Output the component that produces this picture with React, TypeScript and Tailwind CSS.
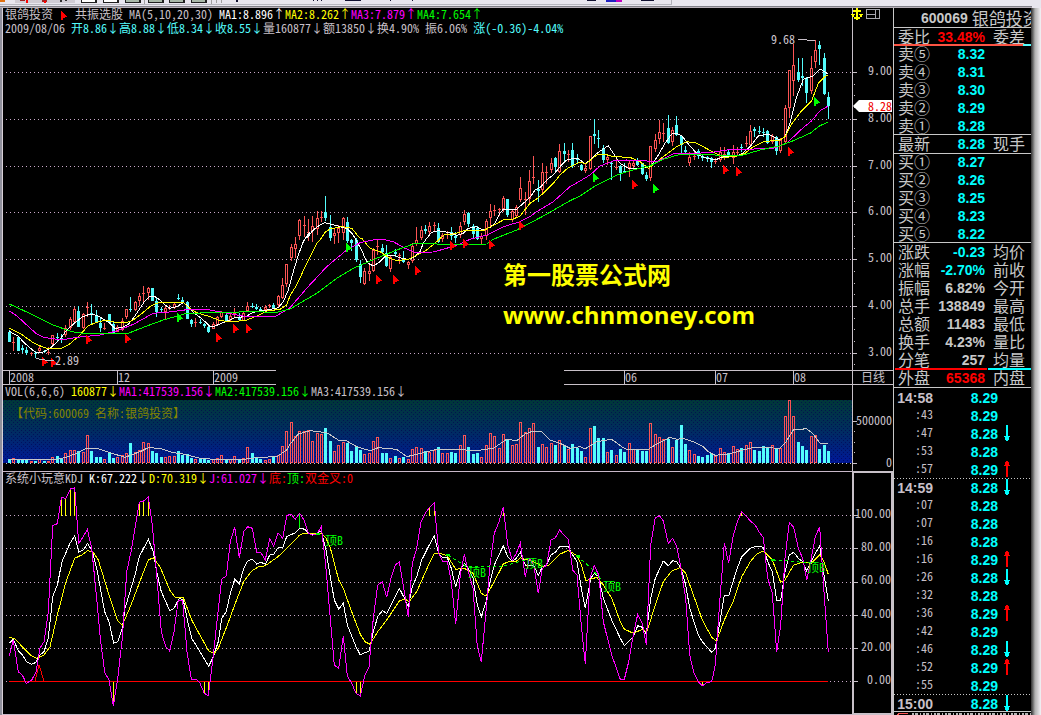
import React from "react";

type Tile = [number, number, string];

/* Each tile holds an origin in pixels and its samples on a three-per-pixel grid. */
function trace(tiles: Tile[]): string {
  return tiles
    .map(([x0, y0, samples]) =>
      samples
        .trim()
        .split(/\s+/)
        .map((pair) => {
          const [x, y] = pair.split(",").map(Number);
          return `${Math.round((x0 + x / 3) * 10) / 10},${Math.round((y0 + y / 3) * 10) / 10}`;
        })
        .join(" ")
    )
    .join(" ");
}

/* direction, high, body top, body bottom, low */
const CANDLES = `
c330,332,342,342 r337,342,343,351 c336,337,351,351 c345,348,350,353 c347,350,353,355 r352,353,354,356 c351,353,354,358
r346,348,351,352 c350,351,352,353 r347,352,353,355 r335,335,344,345 c333,337,338,341 c334,338,340,343 r325,328,335,337
r317,319,328,330 r307,309,322,322 c306,311,327,327 r313,314,328,329 r302,307,309,317 c304,313,314,324 c310,316,323,323
c318,323,328,332 r323,328,329,330 c314,314,323,323 c322,324,333,333 r325,327,332,332 r318,321,330,331 r309,309,317,319
c297,309,310,312 r301,302,310,311 r293,296,301,306 r286,293,294,302 r287,288,293,300 c288,288,301,301 c298,301,312,317
c307,309,310,312 r306,308,312,319 r305,308,309,310 r303,304,308,309 c294,298,299,300 c297,300,303,304 c301,302,319,319
c319,320,324,327 r318,322,323,327 c319,322,323,324 c323,324,326,328 c325,327,332,333 r322,324,329,329 r316,317,325,325
r311,312,317,318 c314,315,322,322 r313,316,320,322 r308,313,315,317 c313,317,320,321 r312,313,321,321 r302,306,311,312
c303,306,307,308 c304,307,309,310 c307,309,310,311 r305,307,310,313 r304,305,306,308 c303,305,308,309 r295,296,305,307
r278,285,298,299 r264,264,284,287 r244,247,258,261 r237,244,249,258 r219,220,236,240 r216,225,226,237 r219,232,233,241
r216,226,231,242 r211,218,229,235 r211,217,219,222 c196,212,218,221 c215,227,238,241 r229,233,236,244 r225,228,233,243
r217,218,233,240 c217,222,241,243 c239,240,243,251 c238,240,260,262 c260,264,277,283 r268,271,284,285 r263,271,274,281
r248,250,271,272 r240,246,247,255 c244,248,252,254 c245,253,266,267 r255,257,269,272 c249,252,254,257 r253,255,257,264
c251,258,262,263 r261,262,265,269 r243,246,261,263 r227,240,244,246 r226,230,238,240 c225,229,231,234 r222,226,232,235
r222,225,227,232 c223,228,242,243 r233,235,239,242 r231,234,235,239 c227,232,236,240 c232,236,238,243 r222,226,235,238
r210,214,222,225 c212,213,224,227 c224,226,234,238 c226,228,239,240 r233,236,239,244 r219,221,236,240 r204,211,218,226
r205,210,212,216 r208,209,210,216 r196,198,209,212 c199,199,215,217 r209,211,220,222 r205,207,216,217 r177,188,200,202
r192,199,201,215 r170,181,199,204 r156,177,179,184 c180,189,191,202 r163,172,190,194 r166,172,174,184 r158,163,170,173
c157,158,167,171 r144,151,172,173 c143,151,154,162 r150,154,155,162 c143,150,166,168 c154,158,160,164 c164,165,170,171
r164,168,171,173 r136,136,169,170 c119,134,136,144 c130,138,139,148 c145,148,160,163 r155,157,160,165 c162,163,164,180
r158,167,168,170 c165,166,173,181 c163,171,172,173 r160,163,168,177 r161,163,166,169 c158,160,165,166 c163,163,174,175
c172,175,179,181 r146,146,178,181 r134,140,149,152 r120,132,139,144 r123,133,134,142 c115,128,143,144 r127,130,142,146
c116,125,135,136 c135,136,145,153 c146,150,152,154 r152,157,163,166 r150,156,157,160 c149,151,156,159 c155,156,158,161
c156,157,159,162 c157,158,162,168 r158,161,163,164 r147,152,160,162 r147,154,155,160 c149,152,157,158 r145,152,158,164
r147,152,153,156 c144,147,148,152 r136,143,145,147 r125,131,145,146 c127,129,131,137 c126,131,132,134 c128,132,133,137
c130,131,143,144 r134,136,142,144 c136,137,151,155 r138,140,151,153 r105,108,142,144 r70,70,108,118 r44,65,81,96
c58,72,80,82 c58,76,78,86 c77,78,93,103 r56,68,91,94 r40,50,62,68 c41,45,49,65 c53,58,94,95 c92,97,106,119`
  .trim()
  .split(/\s+/)
  .map((s) => {
    const [high, top, bottom, low] = s.slice(1).split(",").map(Number);
    return { up: s[0] === "r", high, top, bottom, low };
  });

const VOLUMES = `
4 5 4 4 3 2 2 4 2 2 6 7 4 10 13 13 12 11 28 12 6 6 4 10 5 6 8 10 20 11 13 21 20 12 10 6 6 7 7 12 8 9 5 4 4 4 3 4 5 8 4 4 7
4 5 16 10 6 4 3 4 7 8 17 32 41 27 32 32 33 22 30 29 35 22 12 18 21 20 12 16 13 9 10 22 26 10 10 5 7 5 6 4 14 16 15 12 11
13 16 10 10 11 10 18 28 16 9 10 6 18 30 27 15 29 24 18 19 41 31 35 40 16 19 16 20 18 23 17 14 19 15 12 6 35 37 25 25 11
13 8 14 11 20 14 13 12 12 40 29 26 24 24 16 23 38 19 13 9 7 6 8 10 7 15 11 10 17 14 15 18 21 13 12 17 16 18 15 15 47 63
47 21 17 13 27 28 14 18 12`
  .trim()
  .split(/\s+/)
  .map(Number);

const slotX = (i: number) => Math.round(9 + (i * 13) / 3);

const MA5 = trace([
  [0, 230, "28,303 41,312 54,318 67,332 80,345 93,356 106,367 130,366 150,355 180,328 200,300 225,278 245,262 270,252 290,256 310,267 330,280 345,295 365,293 385,283 400,265 420,235 435,212 450,199 465,200 480,210 495,225 510,235 530,230 550,218 565,228 580,247 600,262 615,275 630,290 645,288 665,280 690,270 705,262 720,262 740,258 760,247 780,242 800,240 835,233 850,215 865,180 880,125 895,75"],
  [290, 230, "40,35 60,5"],
  [290, 0, "50,715 70,690 90,675 105,668 125,673 150,680 170,685 190,705"],
  [290, 230, "200,35 215,60 225,85 235,100 250,108 270,95 290,75 310,75 335,85 355,88 375,80 390,65 400,40"],
  [290, 0, "410,715 425,697 445,692 475,697 500,706 520,700 535,685 560,680 580,690 600,682 615,670 630,640 640,628 680,628 700,610 720,592 735,570 750,563 770,540 790,525 810,500 830,480 850,475 865,475 885,492"],
  [580, 0, "0,480 15,492 30,480 45,465 65,450 85,437 100,460 120,490 145,505 175,505 200,503 215,495 235,465 255,430 275,402 290,400 305,407 325,432 350,460 370,472 405,480 430,470 470,468 490,458 510,440 535,408 565,402 600,420 615,410 630,370 650,290 670,238 700,228 720,207 745,222"],
]);

const MA10 = trace([
  [0, 230, "28,295 60,310 100,338 130,352 150,357 185,355 205,345 235,320 265,287 290,277 320,270 350,278 385,276 400,270 420,255 450,230 470,220 490,216 550,216 565,232 590,248 630,260 660,272 700,275 740,270 770,258 800,243 840,238 860,225"],
  [290, 230, "0,197 20,165 50,100 80,40"],
  [290, 0, "90,720 105,697 120,687 155,680 185,685 210,715"],
  [290, 230, "215,25 240,55 270,65 300,85 320,92 355,88 380,75 410,60 440,35 465,12"],
  [290, 0, "480,705 520,693 580,692 640,660 670,657 690,648 720,610 740,597 760,580 790,550 810,525 835,503 868,487"],
  [580, 0, "0,488 20,490 50,465 75,463 100,470 150,472 180,485 205,505 225,490 260,462 290,440 320,425 345,428 370,440 400,457 430,472 465,470 495,460 520,440 550,425 600,420 615,410 635,372 665,332 695,302 715,250 735,230 745,225"],
]);

const MA20 = trace([
  [0, 230, "28,243 50,257 80,285 110,312 130,322 185,330 230,322 300,315 350,303 400,283 460,250 500,247 570,238 630,240 700,253 740,260 825,260 850,245"],
  [290, 230, "0,233 50,175 110,110 170,60 210,38 250,30 280,28 310,35 345,55 375,67 430,66 470,55 510,42"],
  [290, 0, "540,718 590,705 640,680 690,665 720,650 740,635 790,605 840,560"],
  [580, 0, "0,543 30,525 60,498 100,483 140,480 200,483 230,485 280,462 390,458 440,450 580,445 620,430 665,387 695,362 720,332 745,318"],
]);

const MA30 = trace([
  [0, 230, "28,222 100,255 160,285 215,305 260,311 385,310 440,288 490,270 560,250 640,248 750,245 830,247"],
  [290, 230, "0,237 80,190 140,145 190,115 260,85 320,60 370,42 400,40 500,45 590,42"],
  [290, 0, "610,718 680,690 760,648 840,602"],
  [580, 0, "0,588 50,555 110,525 150,512 210,497 250,478 300,463 370,463 440,467 490,465 540,450 600,437 640,422 690,400 720,377 745,366"],
]);

const VOL_MA = trace([
  [0, 230, "28,690 120,688 160,690 200,682 230,670 260,655 290,655 330,668 375,682 420,665 445,653 480,655 520,668 550,672 600,685 670,690 730,688 780,682 830,680 860,660"],
  [290, 230, "0,643 25,612 60,602 110,608 145,630 170,633 200,650 240,662 265,653 320,658 350,680 400,668 440,658 510,658 550,663 610,655 650,628 680,632 705,612 730,603 755,605 780,630 810,640 840,655"],
  [580, 230, "0,650 15,657 50,635 95,628 125,650 145,660 205,658 225,645 270,622 290,628 310,625 340,635 370,650 385,665 405,676 445,672 490,660 520,652 580,654 600,655 615,640 640,600 680,596 700,612 720,640 745,642"],
]);

const J_LINE = trace([
  [0, 465, "28,572 40,525 55,620 67,630 79,655 95,645 108,622 120,550 132,530 145,440 158,182 172,176 184,98 198,100 211,72 224,68 236,235 250,215 262,193 275,250 290,400 301,520 314,622 327,645 340,723 353,640 367,520 380,320 393,260 405,190 418,112 431,108 445,95 457,180 470,330 484,500 497,545 509,558 522,500 535,405 548,408 561,560 574,642 590,645 600,655 613,685 625,692 639,580 652,460 665,342 679,333 691,230 704,187 718,278 731,200 743,185 757,190 770,262 783,263 796,285 809,222 821,243 834,203 848,220 860,152"],
  [290, 465, "3,147 16,163 29,145 42,165 55,205 68,211 82,205 94,185 107,300 120,450 133,600 146,610 160,512 172,632 185,655 198,685 211,693 225,630 237,605 250,460 263,360 277,350 290,397 303,340 316,300 328,290 341,370 355,455 367,295 380,250 393,170 406,145 418,128 433,113 446,265 458,290 472,290 484,350 497,478 511,330 523,268 535,320 549,370 562,545 574,590 588,440 600,300 613,205 627,170 640,125 653,240 667,285 679,265 691,235 706,335 718,280 731,300 745,385 757,310 770,300 783,225 796,218 809,195 822,210 835,222 848,315 861,330"],
  [580, 465, "4,480 16,598 30,340 43,302 56,330 70,470 95,570 121,643 133,643 146,590 160,510 173,448 187,475 199,540 212,240 226,158 238,152 250,168 265,235 278,220 290,245 303,310 317,400 329,570 342,625 355,650 367,663 380,653 395,650 406,600 420,400 433,235 446,295 459,215 472,170 485,140 498,152 511,168 524,178 537,200 550,218 563,340 577,385 590,560 602,480 615,280 628,172 641,187 655,250 668,280 680,345 694,280 706,215 719,185 732,380 745,562"],
]);

const K_LINE = trace([
  [0, 465, "28,535 40,522 55,558 67,570 80,590 95,598 108,592 120,570 132,560 145,520 158,395 172,360 186,290 210,235 224,212 236,262 250,255 263,235 277,260 290,310 314,440 327,470 341,535 353,530 367,490 375,430 393,370 405,330 418,275 445,223 460,260 470,320 484,380 509,437 522,430 538,400 550,405 561,460 575,520 600,560 626,604 640,575 655,530 665,460 679,440 691,385 704,343 718,357 731,310 743,288 757,283 770,297 783,292 796,298 809,270 821,268 834,248 848,248 860,215"],
  [290, 465, "16,203 29,190 45,193 55,205 70,210 94,198 107,250 120,330 133,405 146,432 160,415 172,480 198,545 211,570 225,563 238,558 250,500 263,455 277,437 290,445 303,420 328,370 341,395 355,425 367,365 380,335 395,285 418,240 433,213 446,265 458,278 472,278 484,310 497,367 511,315 523,295 535,310 549,340 562,420 574,455 588,410 600,350 613,300 640,242 653,275 667,290 679,280 691,262 706,300 731,300 745,332 757,305 770,300 783,270 796,262 809,245 835,245 848,270 861,290"],
  [580, 465, "4,370 16,430 32,340 43,325 56,335 70,400 95,465 121,520 133,542 160,515 173,482 187,487 199,508 212,400 226,340 250,288 265,302 278,287 290,290 303,310 317,360 329,430 355,510 367,530 395,562 406,550 420,470 433,390 446,393 459,350 472,310 485,275 511,250 530,243 550,247 563,290 577,320 590,406 602,406 615,320 628,270 641,262 655,280 668,290 680,318 694,290 706,265 719,243 732,330 745,407"],
]);

const D_LINE = trace([
  [0, 465, "28,517 45,522 67,545 95,573 110,580 132,570 150,545 172,450 198,350 224,280 245,270 263,257 280,262 295,285 327,390 353,468 367,481 393,420 425,335 445,285 460,278 480,305 509,375 525,397 550,398 575,465 605,520 626,557 642,566 655,550 680,485 704,420 731,350 757,316 775,306 796,302 834,275 860,250"],
  [290, 465, "29,210 42,205 94,205 107,218 120,245 146,345 160,370 185,440 211,508 225,530 240,538 263,500 290,465 328,408 345,402 357,410 380,380 418,295 433,265 446,264 472,272 497,313 523,310 549,325 574,385 588,393 613,350 640,297 655,290 680,288 691,278 706,283 731,290 757,305 775,302 809,268 835,256 861,272"],
  [580, 465, "4,300 18,347 50,337 70,360 95,400 121,470 133,492 160,505 187,493 200,502 226,420 250,350 275,318 300,308 317,325 342,395 367,465 395,517 409,528 420,500 433,465 459,410 485,335 511,290 530,267 550,258 563,270 577,285 602,352 615,345 641,300 668,292 694,295 719,270 732,290 745,328"],
]);

const OVERSHOOT: [number, number][] = [
  [61, 498], [65, 499], [70, 489], [74, 488], [139, 503], [143, 501], [148, 497],
  [429, 508], [434, 503], [503, 507], [741, 512],
];
const UNDERSHOOT: [number, number][] = [
  [113, 705], [204, 693], [208, 695], [356, 693], [360, 695], [702, 685],
];

const RED_FLAGS: [number, number][] = [
  [42, 357], [51, 358], [86, 335], [125, 334], [216, 333], [233, 324], [246, 324], [376, 275], [393, 275],
  [415, 266], [450, 241], [463, 239], [489, 240], [519, 221], [632, 180], [723, 165], [736, 167], [788, 147],
];
const GREEN_FLAGS: [number, number][] = [[177, 313], [346, 243], [593, 173], [653, 184], [814, 97]];

const PRICE_GRID = [72, 119, 166, 212, 259, 306, 353];
const KDJ_GRID = [515, 548, 582, 615, 648, 681];

function Flag({ x, y, fill }: { x: number; y: number; fill: string }) {
  return (
    <path
      transform={`translate(${x} ${y})`}
      d="M0 0H1V1H2V2H3V3H4V4H5V5H6V6H4V7H2V9H0Z"
      fill={fill}
    />
  );
}

function GridLines({ rows }: { rows: number[] }) {
  return (
    <>
      {rows.map((y) => (
        <line key={y} x1={6} x2="101%" y1={y + 0.5} y2={y + 0.5} stroke="#c8a8c8" strokeDasharray="1 3" />
      ))}
    </>
  );
}

function PriceChart() {
  return (
    <svg className="block h-[334px] w-full overflow-visible" shapeRendering="crispEdges" role="img" aria-label="日线">
      <g transform="translate(-3 -36)" fill="none">
        <GridLines rows={PRICE_GRID} />
        {CANDLES.map((c, i) => {
          const x = slotX(i);
          const thin = c.bottom - c.top < 3;
          const color = c.up ? "#fc5454" : "#54fcfc";
          return (
            <g key={i}>
              <line x1={x + 0.5} x2={x + 0.5} y1={c.high} y2={c.low} stroke={color} />
              {thin ? (
                <rect x={x - 1} y={c.top} width={3} height={c.up ? 1 : c.bottom - c.top} fill={color} />
              ) : c.up ? (
                <rect x={x - 0.5} y={c.top + 0.5} width={2} height={c.bottom - c.top - 1} stroke={color} fill="#000" />
              ) : (
                <rect x={x - 1} y={c.top} width={3} height={c.bottom - c.top} fill={color} />
              )}
            </g>
          );
        })}
        <polyline points={MA5} stroke="#fff" />
        <polyline points={MA10} stroke="#ff0" />
        <polyline points={MA20} stroke="#f0f" />
        <polyline points={MA30} stroke="#0f0" />
        {RED_FLAGS.map(([x, y]) => (
          <Flag key={x} x={x} y={y} fill="#f00" />
        ))}
        {GREEN_FLAGS.map(([x, y]) => (
          <Flag key={x} x={x} y={y} fill="#0f0" />
        ))}
        <path d="M798 39.5H806L808 40.5H815" stroke="#c8c0c8" />
        <path d="M36 358L40 359.500L50 360.500H54" stroke="#c8c0c8" />
        <g fill="#d0c8d0" fontSize={12} fontFamily="'Noto Sans Mono CJK SC','DejaVu Sans Mono',monospace">
          <text x={771} y={44}>9.68</text>
          <text x={55} y={365}>2.89</text>
        </g>
      </g>
    </svg>
  );
}

function VolumeChart() {
  return (
    <svg className="block h-[64px] w-full" shapeRendering="crispEdges" role="img" aria-label="VOL">
      <defs>
        <linearGradient id="sea" x1="0" y1="0" x2="0" y2="1">
          <stop offset="0" stopColor="#003838" />
          <stop offset="0.45" stopColor="#002e5c" />
          <stop offset="1" stopColor="#001898" />
        </linearGradient>
        <pattern id="grain" width="4" height="4" patternUnits="userSpaceOnUse">
          <rect x="0" y="0" width="1" height="1" fill="#000050" fillOpacity="0.6" />
          <rect x="2" y="2" width="1" height="1" fill="#000050" fillOpacity="0.6" />
        </pattern>
      </defs>
      <rect width="100%" height="63" fill="url(#sea)" />
      <rect width="100%" height="63" fill="url(#grain)" />
      <g transform="translate(-3 -400)" fill="none">
        <line x1={6} x2="101%" y1={463.5} y2={463.5} stroke="#c8c8c8" strokeDasharray="1 3" />
        {VOLUMES.slice(0, CANDLES.length).map((h, i) => {
          const x = slotX(i);
          return CANDLES[i].up ? (
            <rect key={i} x={x - 0.5} y={463.5 - h} width={2} height={h - 1} stroke="#fc5454" />
          ) : (
            <rect key={i} x={x - 1} y={463 - h} width={3} height={h} fill="#54fcfc" />
          );
        })}
        <polyline points={VOL_MA} stroke="#c8c8c8" />
      </g>
    </svg>
  );
}

function KdjChart() {
  return (
    <svg className="block h-[228px] w-full" shapeRendering="crispEdges" role="img" aria-label="KDJ">
      <g transform="translate(-3 -486)" fill="none">
        <GridLines rows={KDJ_GRID} />
        <rect x={9} y={681} width={819} height={1} fill="#f00" />
        <path d="M35 681L39 665L44 681" stroke="#f00" />
        {OVERSHOOT.map(([x, y]) => (
          <line key={x} x1={x + 0.5} x2={x + 0.5} y1={y} y2={516} stroke="#ff0" />
        ))}
        {UNDERSHOOT.map(([x, y]) => (
          <line key={x} x1={x + 0.5} x2={x + 0.5} y1={682} y2={y} stroke="#ff0" />
        ))}
        <line x1={299.5} x2={299.5} y1={514} y2={528} stroke="#0f0" />
        <polyline points={K_LINE} stroke="#fff" />
        <polyline points={D_LINE} stroke="#ff0" />
        <polyline points={J_LINE} stroke="#f0f" />
        <path
          d="M448 555L467 567L503 566L526 560M577 556L591 568L603 581M773 560L790 561L808 563"
          stroke="#0f0"
          strokeDasharray="3 3"
        />
        <g fill="#0f0">
          <rect x={316} y={533} width={4} height={2} />
          <rect x={446} y={554} width={4} height={2} />
          <rect x={576} y={555} width={4} height={2} />
          <rect x={771} y={559} width={4} height={2} />
          <g fontSize={12} fontFamily="'Noto Sans Mono CJK SC','Noto Sans CJK SC',monospace">
            <text x={325} y={545}>顶B</text>
            <text x={468} y={577}>顶B</text>
            <text x={525} y={568}>顶B</text>
            <text x={603} y={591}>顶B</text>
            <text x={807} y={572}>顶B</text>
          </g>
        </g>
      </g>
    </svg>
  );
}

function Mark({ arrow = "↓" }: { arrow?: string }) {
  return <span className="inline-block w-3 text-center">{arrow}</span>;
}

function TickArrow({ up }: { up: boolean }) {
  return (
    <svg className="ml-[6px] block h-[16px] w-[6px]" viewBox="0 0 6 16" shapeRendering="crispEdges" aria-hidden="true">
      {up ? (
        <path d="M2 16V5H0V4H1V1H2V0H4V1H5V4H6V5H4V16Z" fill="#f00" />
      ) : (
        <path d="M2 0V11H0V12H1V15H2V16H4V15H5V12H6V11H4V0Z" fill="#0ff" />
      )}
    </svg>
  );
}

type Quote = [label: string, value: string, second: string, tone: string];

const SELL: Quote[] = [
  ["卖⑤", "8.32", "", "text-[#00ffff]"],
  ["卖④", "8.31", "", "text-[#00ffff]"],
  ["卖③", "8.30", "", "text-[#00ffff]"],
  ["卖②", "8.29", "", "text-[#00ffff]"],
  ["卖①", "8.28", "", "text-[#00ffff]"],
];
const LATEST: Quote[] = [["最新", "8.28", "现手", "text-[#00ffff]"]];
const BUY: Quote[] = [
  ["买①", "8.27", "", "text-[#00ffff]"],
  ["买②", "8.26", "", "text-[#00ffff]"],
  ["买③", "8.25", "", "text-[#00ffff]"],
  ["买④", "8.23", "", "text-[#00ffff]"],
  ["买⑤", "8.22", "", "text-[#00ffff]"],
];
const STATS: Quote[] = [
  ["涨跌", "-0.23", "均价", "text-[#00ffff]"],
  ["涨幅", "-2.70%", "前收", "text-[#00ffff]"],
  ["振幅", "6.82%", "今开", "text-[#c8c8c8]"],
  ["总手", "138849", "最高", "text-[#c8c8c8]"],
  ["总额", "11483", "最低", "text-[#c8c8c8]"],
  ["换手", "4.23%", "量比", "text-[#c8c8c8]"],
  ["分笔", "257", "均量", "text-[#c8c8c8]"],
];

function QuoteTable({ rows, line }: { rows: Quote[]; line: string }) {
  return (
    <table className={`w-full table-fixed border-separate border-spacing-0 ${line}`}>
      <colgroup>
        <col className="w-[38px]" />
        <col className="w-[53px]" />
        <col />
      </colgroup>
      <tbody>
        {rows.map(([label, value, second, tone]) => (
          <tr key={label} className="h-[18px]">
            <th scope="row" className="p-0 pb-[2px] pl-[4px] text-left text-[16px] leading-[16px] font-medium whitespace-nowrap">
              {label}
            </th>
            <td className={`p-0 text-right font-['Liberation_Sans',sans-serif] text-[14px] leading-[17px] font-bold ${tone}`}>
              {value}
            </td>
            <td className="p-0 pb-[2px] pl-[8px] text-[16px] leading-[16px] font-medium whitespace-nowrap">{second}</td>
          </tr>
        ))}
      </tbody>
    </table>
  );
}

const TICKS: [string, string, string][] = [
  ["14:58", "8.29", ""],
  [":43", "8.29", ""],
  [":47", "8.28", "down"],
  [":53", "8.28", ""],
  [":57", "8.29", "up"],
  ["14:59", "8.28", "down"],
  [":07", "8.28", ""],
  [":07", "8.28", ""],
  [":16", "8.28", ""],
  [":16", "8.29", "up"],
  [":26", "8.28", "down"],
  [":32", "8.28", ""],
  [":36", "8.29", "up"],
  [":42", "8.29", ""],
  [":46", "8.28", "down"],
  [":52", "8.29", "up"],
  [":55", "8.29", ""],
  ["15:00", "8.28", "down"],
];

function TickTable() {
  return (
    <table className="w-full table-fixed border-separate border-spacing-0">
      <colgroup>
        <col className="w-[39px]" />
        <col className="w-[65px]" />
        <col />
      </colgroup>
      <tbody>
        {TICKS.map(([time, price, move], i) => {
          const minute = time.length > 3;
          return (
            <tr
              key={i}
              className={`h-[18px] ${
                minute && i > 0
                  ? "bg-[repeating-linear-gradient(to_right,#c8c8c8_0_1px,transparent_1px_3px)] bg-[length:100%_1px] bg-no-repeat"
                  : ""
              }`}
            >
              <td
                className={
                  minute
                    ? "p-0 pt-[2px] text-right font-['Liberation_Sans',sans-serif] text-[14px] leading-[16px] font-bold text-[#c8c0c8]"
                    : "p-0 pb-[2px] text-right text-[12px] leading-[16px] text-[#c8c0c8]"
                }
              >
                {time}
              </td>
              <td className="p-0 pt-[2px] text-right font-['Liberation_Sans',sans-serif] text-[14px] leading-[16px] font-bold text-[#00ffff]">
                {price}
              </td>
              <td className="p-0">{move ? <TickArrow up={move === "up"} /> : null}</td>
            </tr>
          );
        })}
      </tbody>
    </table>
  );
}

function SidePanel() {
  return (
    <aside className="w-[138px] shrink-0 overflow-hidden border-l border-[#c8c8c8] font-['Noto_Sans_Mono_CJK_SC','Noto_Sans_CJK_SC',sans-serif] text-[#c8c8c8]">
      <h1 className="flex h-[19px] items-center gap-1 pl-[27px] text-[17px] leading-[18px] font-medium whitespace-nowrap">
        <span className="font-['Liberation_Sans',sans-serif] text-[14px] font-bold">600069</span>
        <span>银鸽投资</span>
      </h1>
      <QuoteTable rows={[["委比", "33.48%", "委差", "text-[#ff0000]"]]} line="h-[17px] border-t border-[#c8c8c8]" />
      <div className="-mt-[2px] flex h-[2px]">
        <div className="flex-1 bg-[#fc5444]" />
        <div className="w-[8px] bg-[#54fcfc]" />
      </div>
      <div className="-mt-px">
        <QuoteTable rows={SELL} line="" />
      </div>
      <div className="-mt-px">
        <QuoteTable rows={LATEST} line="border-y border-[#c8c8c8]" />
      </div>
      <div className="-mt-px">
        <QuoteTable rows={BUY} line="" />
      </div>
      <div className="-mt-px">
        <QuoteTable rows={STATS} line="border-t border-[#c8c8c8]" />
      </div>
      <div className="-mt-px flex h-[2px] gap-px pl-px">
        <div className="w-[92px] bg-[#ff0000]" />
        <div className="flex-1 bg-[#00ffff]" />
      </div>
      <div className="-mt-px h-[19px]">
        <QuoteTable rows={[["外盘", "65368", "内盘", "text-[#ff0000]"]]} line="border-b border-[#c8c8c8]" />
      </div>
      <TickTable />
      <svg className="relative -mt-px block h-[4px] w-full bg-black" shapeRendering="crispEdges" aria-hidden="true">
        <rect width="100%" height="1" fill="#c8c8c8" />
        <path d="M3 4L6 2H14" stroke="#fc5454" fill="none" />
        <path d="M18 2.500H138M18 3.500H138" stroke="#b8b8b8" strokeDasharray="2 1 3 2 1 2" />
      </svg>
    </aside>
  );
}

function ToolbarStrip() {
  return (
    <svg className="block h-[8px] w-full bg-[#e8e6ee]" shapeRendering="crispEdges" aria-hidden="true">
      <rect x="15" width="60" height="3" fill="#d0ccd4" />
      <path d="M0 0H5V2H0Z" fill="#e07010" />
      <path d="M20 0H25V1H20ZM42 0H47V2H42Z" fill="#a02020" />
      <path d="M26 0H28V3H26ZM44 1H46V3H44Z" fill="#f00" />
      <path d="M60 0H62V2H60ZM65 0H67V1H65Z" fill="#303030" />
      {[81, 103, 125, 148, 169, 191].map((x, i) => (
        <g key={x}>
          <rect x={x} width="16" height="3" fill="#202020" />
          <rect x={x + 1} width="13" height="2" fill={i < 2 ? "#fff" : "#a8b8a8"} />
        </g>
      ))}
      <path d="M144 0H145V4H144ZM211 0H212V4H211ZM216 0H217V3H216ZM221 0H222V3H221Z" fill="#a0a0a0" />
      <path d="M236 0H238V2H236ZM313 0H314V1H313ZM317 0H318V1H317ZM321 0H322V1H321ZM345 0H361V1H345ZM390 0H391V1H390ZM412 0H413V1H412ZM587 0H596V1H587ZM641 0H654V1H641Z" fill="#101030" />
      <path d="M606 0H616V2H606Z" fill="#2020c0" />
      <path d="M616 0H622V2H616Z" fill="#c000c0" />
      <path d="M0 4H672V0H671V4Z" fill="#b0b0b8" />
      <rect y="4" width="672" height="1" fill="#b8b8c0" />
      <rect y="6" width="1032" height="1" fill="#808088" />
      <rect y="7" width="1032" height="1" fill="#b8b0b8" />
    </svg>
  );
}

function AxisTicks({ rows, minor, shift }: { rows: number[]; minor: number[]; shift: number }) {
  return (
    <svg className="absolute inset-0 h-full w-full" shapeRendering="crispEdges" aria-hidden="true">
      <g fill="#c8c0c8">
        {rows.map((y) => (
          <rect key={y} x={0} y={y - shift} width={4} height={1} />
        ))}
        {minor.map((y) => (
          <rect key={y} x={1} y={y - shift} width={1} height={1} />
        ))}
      </g>
    </svg>
  );
}

const PRICE_MINOR = Array.from({ length: 25 }, (_, i) => Math.round(83.7 + i * 11.7)).filter(
  (y) => y < 366 && !PRICE_GRID.some((g) => Math.abs(g - y) < 3)
);

export default function App() {
  return (
    <div className="flex min-h-screen flex-col bg-[#e8e6ee]">
      <ToolbarStrip />
      <div className="flex flex-1">
        <div className="w-[3px] shrink-0 border-r border-[#d8d0d8] bg-[#90909c]" />
        <div className="flex min-w-0 flex-1 bg-black">
          <main className="min-w-0 flex-1 font-['Noto_Sans_Mono_CJK_SC','DejaVu_Sans_Mono','Noto_Sans_CJK_SC',monospace] text-[12px] text-[#c8c0c8]">
            <section className="flex">
              <div className="relative min-w-0 flex-1">
                <header className="h-[28px] pl-[2px] leading-[14px] whitespace-pre">
                  <p className="flex h-[13px] leading-[12px]">
                    <span>银鸽投资</span>
                    <svg className="ml-2 mr-[7px] mt-[3px] block h-[9px] w-[7px]" shapeRendering="crispEdges" aria-hidden="true">
                      <Flag x={0} y={0} fill="#f00" />
                    </svg>
                    <span>共振选股 MA(5,10,20,30) </span>
                    <span className="text-white">MA1:8.896<Mark arrow="↑" /></span>
                    <span className="text-[#ffff00]">MA2:8.262<Mark arrow="↑" /></span>
                    <span className="text-[#ff00ff]">MA3:7.879<Mark arrow="↑" /></span>
                    <span className="text-[#00ff00]">MA4:7.654<Mark arrow="↑" /></span>
                  </p>
                  <p>
                    <span>2009/08/06 </span>
                    <span className="text-[#54fcfc]">
                      开8.86<Mark />高8.88<Mark />低8.34<Mark />收8.55<Mark />
                    </span>
                    <span>
                      量160877<Mark />额13850<Mark />换4.90% 振6.06%{" "}
                    </span>
                    <span className="text-[#54fcfc]">涨(-0.36)-4.04%</span>
                  </p>
                </header>
                <PriceChart />
                <div className="absolute top-[247px] left-[500px] font-['Open_Sans','Noto_Sans_CJK_SC',sans-serif] text-[24px] leading-[40px] font-bold text-[#ffff00]">
                  <p>第一股票公式网</p>
                  <p>www.chnmoney.com</p>
                </div>
              </div>
              <div className="relative w-[41px] shrink-0 border-l border-[#c8c0c8]">
                <AxisTicks rows={PRICE_GRID} minor={PRICE_MINOR} shift={8} />
                <svg className="relative -ml-[2px] block h-[12px] w-[30px]" shapeRendering="crispEdges" aria-hidden="true">
                  <path d="M5 0H7V2H10V4H7V9H9V7H8V6H12V7H11V9H9V11H7V12H5V11H3V9H1V7H0V6H4V7H3V9H5V4H2V2H5Z" fill="#ff0" />
                  <path d="M15.500 1.500H28.500V10.500H15.500ZM24.500 1.500V10.500M15.500 6.500H24.500" stroke="#a8a8b0" fill="none" />
                </svg>
                <div className="mt-[44px] flex h-[293px] flex-col justify-between pr-px leading-[12px]">
                  {["9.00", "8.00", "7.00", "6.00", "5.00", "4.00", "3.00"].map((v) => (
                    <p key={v} className="text-right">
                      {v}
                    </p>
                  ))}
                </div>
                <div className="absolute top-[92px] left-0 flex h-[12px]">
                  <svg className="block h-[12px] w-[6px]" aria-hidden="true">
                    <path d="M6 0L0 6L6 12Z" fill="#fff" />
                  </svg>
                  <span className="w-[33px] bg-white text-right leading-[12px] text-[#f00000]">8.28</span>
                </div>
              </div>
            </section>

            <section className="flex h-[15px] leading-[12px] whitespace-nowrap">
              <div className="flex w-[273px] border-y border-[#c8c0c8] pl-[6px]">
                <span className="w-[108px] border-l border-[#c8c0c8]">2008</span>
                <span className="w-[96px] border-l border-[#c8c0c8]">12</span>
                <span className="border-l border-[#c8c0c8]">2009</span>
              </div>
              <div className="w-[288px]" />
              <div className="flex flex-1 border-y border-[#c8c0c8] pl-[60px]">
                <span className="w-[91px] border-l border-[#c8c0c8]">06</span>
                <span className="w-[78px] border-l border-[#c8c0c8]">07</span>
                <span className="border-l border-[#c8c0c8]">08</span>
              </div>
              <div className="w-[41px] border-y border-l border-[#c8c0c8] text-center">日线</div>
            </section>

            <section className="flex">
              <div className="relative min-w-0 flex-1">
                <p className="h-[15px] pl-[2px] leading-[12px] whitespace-pre">
                  <span>VOL(6,6,6) </span>
                  <span className="text-[#ffff00]">160877<Mark /></span>
                  <span className="text-[#ff00ff]">MA1:417539.156<Mark /></span>
                  <span className="text-[#00ff00]">MA2:417539.156<Mark /></span>
                  <span>MA3:417539.156<Mark /></span>
                </p>
                <VolumeChart />
                <p className="absolute top-[21px] left-[8px] leading-[14px] whitespace-pre text-[#848400]">
                  【代码:600069 名称:银鸽投资】
                </p>
                <div className="h-[7px]" />
              </div>
              <div className="relative w-[41px] shrink-0 border-l border-[#c8c0c8] pr-px">
                <AxisTicks rows={[421, 463]} minor={[431, 442, 452]} shift={385} />
                <p className="mt-[28px] flex h-[14px] justify-end leading-[14px]">500000</p>
                <p className="mt-[28px] flex h-[14px] justify-end leading-[14px]">0</p>
              </div>
            </section>

            <section className="flex">
              <div className="min-w-0 flex-1 border-y border-[#c8b8c8]">
                <p className="h-[14px] pl-[2px] leading-[12px] whitespace-pre">
                  <span>系统小玩意KDJ </span>
                  <span className="text-white">K:67.222<Mark /></span>
                  <span className="text-[#ffff00]">D:70.319<Mark /></span>
                  <span className="text-[#ff00ff]">J:61.027<Mark /></span>
                  <span className="text-[#ff0000]">底:</span>
                  <span className="text-[#00ff00]">顶:</span>
                  <span className="text-[#ff0000]">双金叉:0</span>
                </p>
                <KdjChart />
              </div>
              <div className="relative w-[41px] shrink-0 border-2 border-[#c8c0c8]">
                <AxisTicks rows={KDJ_GRID} minor={[]} shift={473} />
                <div className="mt-[34px] flex h-[178px] flex-col justify-between leading-[12px]">
                  {["100.00", "80.00", "60.00", "40.00", "20.00", "0.00"].map((v) => (
                    <p key={v} className="flex justify-end">
                      {v}
                    </p>
                  ))}
                </div>
              </div>
            </section>
          </main>
          <SidePanel />
        </div>
        <div className="w-[10px] shrink-0 bg-linear-to-r from-[#303030] via-[#b0b0b0] via-40% to-[#f4f2f6]" />
      </div>
    </div>
  );
}
